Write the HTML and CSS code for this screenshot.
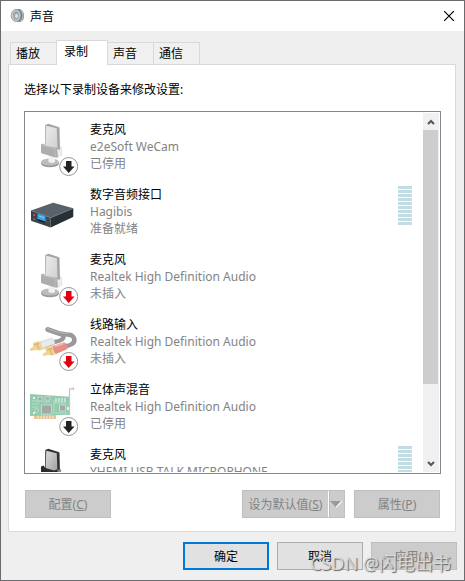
FILE: index.html
```html
<!DOCTYPE html>
<html lang="zh-CN">
<head>
    <meta charset="UTF-8">
    <meta name="viewport" content="width=device-width, initial-scale=1.0">
    <title>声音</title>
    <link rel="stylesheet" href="styles.css">
</head>
<body>
    <!-- Shared device icons -->
    <svg class="defs" width="0" height="0" aria-hidden="true">
        <defs>
            <linearGradient id="fade" x1="0" y1="0" x2="1" y2="1">
                <stop offset="0" stop-color="#ececec"/>
                <stop offset="1" stop-color="#d0d0d0"/>
            </linearGradient>
            <linearGradient id="steel" x1="0" y1="0" x2="1" y2="1">
                <stop offset="0" stop-color="#dcdcdc"/>
                <stop offset="1" stop-color="#9c9c9c"/>
            </linearGradient>
            <symbol id="mic" viewBox="-2 0 50 56">
                <ellipse cx="20" cy="42.500" rx="9" ry="3.800" fill="#9a9a9a"/>
                <ellipse cx="20" cy="41" rx="9" ry="3.500" fill="#bcbcbc"/>
                <path d="M18.500 34h6.500v7q-3 2-6.500 0z" fill="#f1f1f1"/>
                <path d="M25 27l5-2 1.500 1 .3 8-5 3z" fill="#ededed" stroke="#d2d2d2" stroke-width=".5"/>
                <path d="M15.300 4l3-1.300L28.500 6l1 .8.5 22-15-3z" fill="#a4a4a4"/>
                <path d="M16.300 4.800l10.500 2.500.7 20-12-2.500z" fill="url(#fade)"/>
                <path d="M11 23.500l2.500-1 2 2.500 8.500 2.500 3-1 1 9.300-2 1-14.500-4.600-.5-1z" fill="#adadad"/>
                <path d="M11.500 24l13.500 4v8" fill="none" stroke="#c3c3c3" stroke-width=".7"/>
            </symbol>
            <symbol id="mic-on" viewBox="-2 0 50 56">
                <path d="M15.300 4l3-1.300L28.500 6l1 .8.5 22-15-3z" fill="#303030"/>
                <path d="M16.300 4.800l10.500 2.500.7 20-12-2.500z" fill="url(#steel)"/>
                <path d="M11 20.500l2.500-1 2 2.500 8.500 2.500 3-1 1 9.300-17-4.300z" fill="#2c2c2c"/>
                <path d="M28 24l3-1 .5 9-3 3z" fill="#8b8b8b"/>
            </symbol>
            <symbol id="box" viewBox="-2 0 50 56">
                <path d="M1 24.500L22.300 17q1-.4 2 0l19 5.300L20.700 31.700z" fill="#59626a"/>
                <path d="M1 24.500l19.700 7.200v9.800L1.500 35q-.5-.3-.5-1z" fill="#3c444b"/>
                <path d="M20.700 31.700l22.600-9.400v8q0 .7-.7 1L20.700 41.500z" fill="#293035"/>
                <path d="M1 24.500l19.700 7.200 22.600-9.400" fill="none" stroke="#78828a" stroke-width=".6"/>
                <path d="M7.500 27.500l8 2.700v5.300l-8-2.700z" fill="#37a5f2"/>
                <path d="M9 30l5 1.600" stroke="#8bd0ff" stroke-width=".8"/>
                <path d="M8 34l7 2.400" stroke="#14191d" stroke-width="1.200"/>
                <circle cx="4.300" cy="29" r="1.200" fill="#e13d3d"/>
                <circle cx="4.300" cy="33" r=".8" fill="#879098"/>
                <circle cx="18" cy="34.500" r="1.400" fill="#12171a" stroke="#87919a" stroke-width=".6"/>
            </symbol>
            <symbol id="cable" viewBox="-2 0 50 56">
                <g fill="none" stroke="#999" stroke-width="4.500" stroke-linecap="round">
                    <path d="M17.500 13.500l14.500 5q3 2.500 0 5-3 2-8 2.500"/>
                    <path d="M18 13.500c9 4 14 4.500 19 5 8 0 9 7 5 9.500q-3 2-7 2"/>
                </g>
                <path d="M17.500 12.500c9 4 14 4.500 20 5" fill="none" stroke="#b9b9b9"/>
                <path d="M3 27l4-1.500 4 0 3 7.500-4 1.500-4-.5L1 35l-1.500-2L3 31z" fill="#f0d292"/>
                <path d="M4 29l5-1.500M6.500 27l2.500 6.500" stroke="#cfa856" stroke-width=".8"/>
                <path d="M10.500 25.500L22 22l2.500 3 .2 4L13.500 33q-3-3-3-7.500z" fill="#e9e9e9" stroke="#ccc" stroke-width=".5"/>
                <path d="M23.500 28.500L14 32" stroke="#bcbcbc"/>
                <path d="M15.500 32l5-2h3.500l2.500 8-4.500 1.500-4-.5-4.500 1-1-2 3.500-2z" fill="#f0d292"/>
                <path d="M17 34l6-1.500M19.500 32l2.500 7" stroke="#cfa856" stroke-width=".8"/>
                <path d="M23 30l11-3.700q3.500 2.500 3.500 6.700L26 38q-3-3-3-8z" fill="#e68f87"/>
                <path d="M24.500 30.500l9-3" stroke="#f2bbb4" stroke-width="1.500"/>
            </symbol>
            <symbol id="card" viewBox="-2 0 50 56">
                <path d="M4 34h22v4H4z" fill="#e6c594"/>
                <path d="M8 34v4m3-4v4m3-4v4m3-4v4m3-4v4m3-4v4" stroke="#fff" stroke-width=".6"/>
                <path d="M0 13l39.300 2.700v18L0 35z" fill="#92ccae"/>
                <path d="M39.500 34V8l4-.7v2" fill="none" stroke="#c4c4c4" stroke-width="1.300"/>
                <path d="M2 20h8m-8 3h7m-7 3h6m16-4h12M23 32h14M13 21h7M24 19v12" stroke="#c4e5d1" stroke-width=".7"/>
                <g fill="#a2a9a6" stroke="#dce6e1" stroke-width=".7">
                    <path d="M11.500 24h10v9h-10zM29.500 24h6v6h-6zM8 16h4v4H8zM15 16h5v3h-5z"/>
                    <path d="M5 28h3v3H5z"/>
                </g>
                <path d="M26 17v4m3-4v4m3-4v4m3-4v4" stroke="#e9eeeb" stroke-width="1.200"/>
                <path d="M3 16h2v2H3zM37 26h2v3h-2zM3 31h2v2H3z" fill="#e8f2ec"/>
            </symbol>
            <symbol id="badge" viewBox="-2 0 50 56">
                <circle cx="38.700" cy="45.500" r="9" fill="#fdfdfd" stroke="#969696"/>
                <path d="M36 40h5.500v5.500h3L38.700 52 33 45.500h3z" fill="currentColor"/>
            </symbol>
        </defs>
    </svg>

    <div class="window">
        <header class="titlebar">
            <svg class="app-icon" viewBox="0 0 16 16" aria-hidden="true">
                <path d="M5 1.500l5-.5q4 2 4 7t-4 6l-5-1z" fill="#747a7d"/>
                <path d="M10 1.500q3 2 3 6t-3 6" fill="none" stroke="#b8bcbe" stroke-width="1.200"/>
                <ellipse cx="6" cy="7.500" rx="4.800" ry="6" fill="#c5ccd0" stroke="#8b9499" stroke-width=".8"/>
                <ellipse cx="6" cy="7.500" rx="3" ry="4.200" fill="#9aa7af"/>
                <ellipse cx="6.500" cy="8" rx="1.500" ry="2" fill="#dce4e8"/>
            </svg>
            <h1>声音</h1>
            <button class="close" type="button" aria-label="关闭">
                <svg viewBox="0 0 10 10"><path d="M0 0l10 10M10 0L0 10" stroke="#000" stroke-width="1.200"/></svg>
            </button>
        </header>

        <main class="content">
            <nav class="tabs" role="tablist">
                <button class="tab" type="button" role="tab">播放</button>
                <button class="tab active" type="button" role="tab" aria-selected="true">录制</button>
                <button class="tab" type="button" role="tab">声音</button>
                <button class="tab" type="button" role="tab">通信</button>
            </nav>

            <section class="panel">
                <p class="hint">选择以下录制设备来修改设置:</p>

                <div class="device-box">
                    <ul class="devices">
                        <li class="device">
                            <svg class="icon"><use href="#mic"/><use href="#badge"/></svg>
                            <div class="info">
                                <strong>麦克风</strong>
                                <span>e2eSoft WeCam</span>
                                <span>已停用</span>
                            </div>
                        </li>
                        <li class="device">
                            <svg class="icon"><use href="#box"/></svg>
                            <div class="info">
                                <strong>数字音频接口</strong>
                                <span>Hagibis</span>
                                <span>准备就绪</span>
                            </div>
                            <div class="meter"></div>
                        </li>
                        <li class="device">
                            <svg class="icon unplugged"><use href="#mic"/><use href="#badge"/></svg>
                            <div class="info">
                                <strong>麦克风</strong>
                                <span>Realtek High Definition Audio</span>
                                <span>未插入</span>
                            </div>
                        </li>
                        <li class="device">
                            <svg class="icon unplugged"><use href="#cable"/><use href="#badge"/></svg>
                            <div class="info">
                                <strong>线路输入</strong>
                                <span>Realtek High Definition Audio</span>
                                <span>未插入</span>
                            </div>
                        </li>
                        <li class="device">
                            <svg class="icon"><use href="#card"/><use href="#badge"/></svg>
                            <div class="info">
                                <strong>立体声混音</strong>
                                <span>Realtek High Definition Audio</span>
                                <span>已停用</span>
                            </div>
                        </li>
                        <li class="device">
                            <svg class="icon"><use href="#mic-on"/></svg>
                            <div class="info">
                                <strong>麦克风</strong>
                                <span>YHEMI USB TALK MICROPHONE</span>
                            </div>
                            <div class="meter"></div>
                        </li>
                    </ul>
                    <div class="scrollbar">
                        <button class="scroll-btn" type="button" aria-label="向上滚动">
                            <svg viewBox="0 0 8 6"><path d="M1 5l3-3 3 3" fill="none" stroke="#555" stroke-width="2"/></svg>
                        </button>
                        <div class="track"><div class="thumb"></div></div>
                        <button class="scroll-btn" type="button" aria-label="向下滚动">
                            <svg viewBox="0 0 8 6"><path d="M1 1l3 3 3-3" fill="none" stroke="#555" stroke-width="2"/></svg>
                        </button>
                    </div>
                </div>

                <div class="actions">
                    <button class="btn" type="button" disabled>配置(<u>C</u>)</button>
                    <div class="split">
                        <button class="btn split-main" type="button" disabled>设为默认值(<u>S</u>)</button>
                        <button class="btn split-arrow" type="button" aria-label="更多" disabled>
                            <svg viewBox="0 0 12 8"><path d="M6 7l6-6" stroke="#fff" stroke-width="1.500"/><path d="M0 1h11L5.500 7z" fill="#9a9a9a"/></svg>
                        </button>
                    </div>
                    <button class="btn" type="button" disabled>属性(<u>P</u>)</button>
                </div>
            </section>
        </main>

        <footer class="footer">
            <button class="btn default" type="button">确定</button>
            <button class="btn" type="button">取消</button>
            <button class="btn" type="button" disabled>应用(<u>A</u>)</button>
            <span class="watermark">CSDN @闪电出书</span>
        </footer>
    </div>
</body>
</html>
```
FILE: styles.css
```css
* {
    box-sizing: border-box;
}

body {
    margin: 0;
    font-family: "Noto Sans", "Noto Sans CJK SC", sans-serif;
    font-size: 12px;
    line-height: 17px;
    color: #000;
}

button {
    font: inherit;
    color: inherit;
}

.defs {
    position: absolute;
}

.window {
    display: flex;
    flex-direction: column;
    height: 100vh;
    border: 1px solid #6b6b6e;
    background-color: #efefef;
}

/* Title bar */
.titlebar {
    display: flex;
    align-items: center;
    height: 30px;
    padding-left: 9px;
    background-color: #fff;
}

.app-icon {
    width: 16px;
    height: 16px;
    margin-right: 4px;
}

.titlebar h1 {
    flex: 1;
    margin: 0;
    font-size: 12px;
    font-weight: normal;
}

.close {
    display: flex;
    align-items: center;
    justify-content: center;
    width: 30px;
    height: 28px;
    padding: 0;
    border: none;
    background: none;
}

.close svg {
    width: 10px;
    height: 10px;
}

/* Tabs */
.content {
    display: flex;
    flex: 1;
    flex-direction: column;
    min-height: 0;
    padding: 9px 8px 0 7px;
}

.tabs {
    display: flex;
    align-items: flex-end;
    padding-left: 2px;
    margin-bottom: -1px;
}

.tab {
    width: 47px;
    height: 23px;
    padding: 0 0 0 5px;
    margin-right: -1px;
    border: 1px solid #d9d9d9;
    background-color: #f0f0f0;
    text-align: left;
}

.tab.active {
    z-index: 1;
    width: 52px;
    height: 25px;
    padding: 0 0 4px 7px;
    border-bottom: none;
    background-color: #fff;
}

.panel {
    display: flex;
    flex: 1;
    flex-direction: column;
    min-height: 0;
    padding: 16px 14px 13px 15px;
    border: 1px solid #d9d9d9;
    background-color: #fff;
}

.hint {
    margin: 0 0 13px;
}

/* Device list */
.device-box {
    display: flex;
    flex: 1;
    min-height: 0;
    padding: 1px;
    border: 1px solid #828790;
}

.devices {
    flex: 1;
    margin: 0;
    padding: 8px 11px 0 2px;
    overflow: hidden;
    list-style: none;
}

.device {
    display: flex;
    height: 65px;
}

.icon {
    width: 50px;
    height: 56px;
    margin-right: 12px;
    overflow: visible;
    color: #222;
}

.icon.unplugged {
    color: #e0000f;
}

.info {
    display: flex;
    flex: 1;
    flex-direction: column;
    white-space: nowrap;
}

.info strong {
    font-weight: normal;
}

.info span {
    color: #838383;
}

.meter {
    width: 14px;
    height: 39px;
    background: repeating-linear-gradient(#c1dce2 0 3px, #fff 3px 4px);
}

.scrollbar {
    display: flex;
    flex-direction: column;
    width: 16px;
    background-color: #f0f0f0;
}

.scroll-btn {
    display: flex;
    align-items: center;
    justify-content: center;
    height: 17px;
    padding: 0;
    border: none;
    background: none;
}

.scroll-btn svg {
    width: 8px;
    height: 6px;
}

.track {
    flex: 1;
}

.thumb {
    height: 78%;
    margin-right: 1px;
    background-color: #cdcdcd;
}

/* Buttons */
.btn {
    width: 86px;
    height: 28px;
    padding: 0;
    border: 1px solid #adadad;
    background-color: #e1e1e1;
}

.btn:disabled {
    border-color: #bfbfbf;
    background-color: #ccc;
    color: #838383;
}

.btn.default {
    border: 2px solid #0078d7;
}

.actions {
    display: flex;
    gap: 9px;
    margin-top: 16px;
    padding: 0 1px;
}

.split {
    display: flex;
    margin-left: auto;
}

.btn.split-main {
    border-right: none;
}

.btn.split-arrow {
    display: flex;
    align-items: center;
    justify-content: center;
    width: 17px;
    border-left: none;
    box-shadow: inset 1px 0 #fff, inset 2px 0 #bbb;
}

.split-arrow svg {
    width: 12px;
    height: 8px;
}

.footer {
    position: relative;
    display: flex;
    justify-content: flex-end;
    gap: 8px;
    padding: 10px 7px;
}

.watermark {
    position: absolute;
    right: 13px;
    bottom: 4px;
    color: rgba(225, 225, 225, 0.85);
    font-size: 18px;
    line-height: 26px;
    text-shadow: 1px 1px 1px #666;
    white-space: nowrap;
    pointer-events: none;
}
```
